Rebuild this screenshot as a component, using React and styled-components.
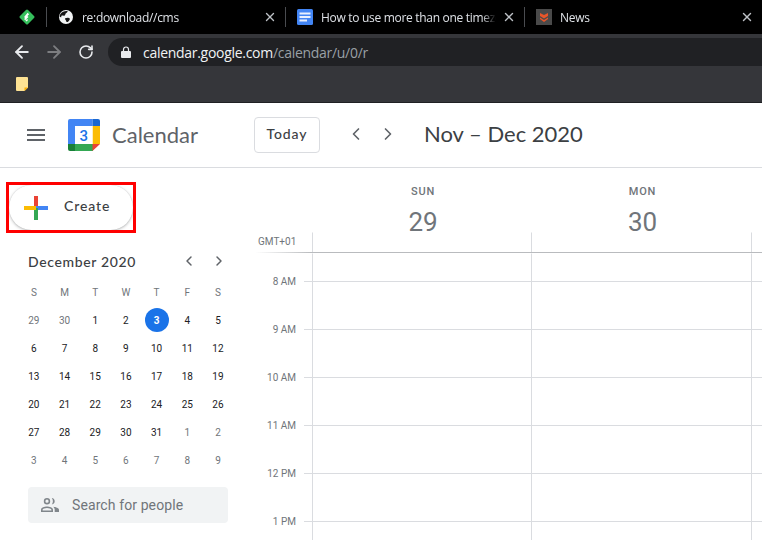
import React from 'react';
import styled, { createGlobalStyle } from 'styled-components';
import { ArrowLeft, ArrowRight, RotateCw, ChevronLeft, ChevronRight, X } from 'lucide-react';

const GlobalStyle = createGlobalStyle`
  html, body {
    margin: 0;
    padding: 0;
    height: 540px;
    overflow: hidden;
    background: #fff;
    font-family: Roboto, "Liberation Sans", sans-serif;
  }
  * { box-sizing: border-box; }
`;

const Page = styled.div`
  width: 762px;
  height: 540px;
  display: flex;
  flex-direction: column;
  overflow: hidden;
`;

const TabStrip = styled.div`
  height: 34px;
  background: #000;
  display: flex;
  align-items: center;
`;

const PinnedTab = styled.div`
  width: 46px;
  height: 20px;
  padding-left: 19px;
  display: flex;
  align-items: center;
`;

const Tab = styled.div`
  width: ${(p) => p.$width}px;
  height: 20px;
  border-left: 1px solid #4a4c50;
  display: flex;
  align-items: center;
  padding: 0 8px 0 11px;
  color: #dee1e6;
`;

const TabIcon = styled.svg`
  width: 16px;
  height: 16px;
  flex: none;
`;

const TabTitle = styled.span`
  flex: 1;
  margin: 0 6px 0 8px;
  font-family: "Open Sans", sans-serif;
  font-size: 12px;
  letter-spacing: -0.3px;
  white-space: nowrap;
  overflow: hidden;
  mask-image: linear-gradient(to left, transparent 0, #000 14px);
`;

const Toolbar = styled.div`
  height: 36px;
  background: #35363a;
  display: flex;
  align-items: center;
  padding-left: 12px;
  color: #e8eaed;
`;

const NavButton = styled.div`
  width: 32px;
  padding-left: ${(p) => p.$inset || 0}px;
  display: flex;
  align-items: center;
  color: ${(p) => (p.$off ? '#7d7e81' : '#e8eaed')};
`;

const Omnibox = styled.div`
  flex: 1;
  height: 28px;
  background: #202124;
  border-radius: 14px 0 0 14px;
  display: flex;
  align-items: center;
  padding-left: 13px;
  font-family: "Open Sans", sans-serif;
  font-size: 14px;
  letter-spacing: -0.29px;
`;

const UrlHost = styled.span`
  margin-left: 12px;
  color: #f1f3f4;
`;

const UrlPath = styled.span`
  color: #9aa0a6;
`;

const Bookmarks = styled.div`
  height: 33px;
  background: #35363a;
  border-bottom: 1px solid #1f2023;
  padding: 7px 0 0 16px;
`;

const Glyph = styled.svg`
  display: block;
  flex: none;
`;

const AppHeader = styled.header`
  height: 65px;
  border-bottom: 1px solid #dadce0;
  display: flex;
  align-items: center;
  color: #3c4043;
`;

const Menu = styled.svg`
  width: 18px;
  height: 12px;
  margin: 0 23px 0 27px;
  flex: none;
`;

const Brand = styled.span`
  margin: 0 0 2px 12px;
  width: 142px;
  font-family: Lato, sans-serif;
  font-size: 22px;
  color: #5f6368;
`;

const TodayButton = styled.button`
  width: 66px;
  height: 36px;
  background: #fff;
  border: 1px solid #dadce0;
  border-radius: 4px;
  color: #3c4043;
  font-family: Lato, sans-serif;
  font-size: 14px;
  font-weight: 500;
  letter-spacing: 0.9px;
  padding: 0 0 3px;
`;

const HeaderNav = styled.div`
  display: flex;
  gap: 12px;
  margin: 0 0 2px 26px;
  color: #5f6368;
`;

const RangeTitle = styled.h1`
  margin: 0 0 4px 26px;
  font-family: Lato, sans-serif;
  font-size: 22px;
  font-weight: 400;
  color: #3c4043;
`;

const Body = styled.div`
  flex: 1;
  display: flex;
  min-height: 0;
`;

const Sidebar = styled.aside`
  width: 256px;
  flex: none;
  padding: 14px 0 0 6px;
`;

const CreateFrame = styled.div`
  width: 130px;
  height: 51px;
  border: 3px solid #f00;
  overflow: hidden;
`;

const CreateButton = styled.button`
  width: 100%;
  height: 45px;
  display: flex;
  align-items: center;
  gap: 16px;
  padding: 0 0 0 15px;
  background: #fff;
  border: none;
  border-radius: 24px;
  box-shadow: 0 1px 3px 0 rgba(60, 64, 67, 0.35), 0 0 1px rgba(60, 64, 67, 0.2);
  color: #3c4043;
  font-family: Lato, sans-serif;
  font-size: 14px;
  font-weight: 500;
  letter-spacing: 0.9px;
`;

const CreateLabel = styled.span`
  margin-bottom: 5px;
`;

const MiniCal = styled.section`
  margin: 16px 0 0 12.5px;
  width: 217px;
`;

const MiniHead = styled.div`
  height: 24px;
  padding-left: 9.5px;
  display: flex;
  align-items: center;
  font-family: Lato, sans-serif;
  font-size: 14px;
  font-weight: 500;
  letter-spacing: 0.65px;
  color: #3c4043;
`;

const MiniTitle = styled.span`
  flex: 1;
`;

const MiniNav = styled.div`
  display: flex;
  gap: 14px;
  margin-right: 9px;
  color: #5f6368;
`;

const MiniGrid = styled.div`
  margin-top: 5px;
  display: grid;
  grid-template-columns: repeat(7, 30.7px);
  grid-auto-rows: 28px;
`;

const MiniCell = styled.div`
  display: flex;
  align-items: center;
  justify-content: center;
  font-size: 10px;
  font-weight: 400;
  color: ${(p) => (p.$head || p.$muted ? '#70757a' : '#202124')};
`;

const Today = styled.span`
  width: 24px;
  height: 24px;
  border-radius: 50%;
  background: #1a73e8;
  color: #fff;
  display: flex;
  align-items: center;
  justify-content: center;
  font-weight: 700;
`;

const PeopleSearch = styled.div`
  margin: 13px 0 0 9.5px;
  width: 200px;
  height: 36px;
  border-radius: 4px;
  background: #f1f3f4;
  display: flex;
  align-items: center;
  gap: 13px;
  padding-left: 13px;
  font-size: 14px;
  letter-spacing: 0.1px;
  color: #70757a;
`;

const Main = styled.main`
  flex: 1;
  min-width: 0;
`;

const Columns = `
  display: grid;
  grid-template-columns: 48px 8px 219px 220px 1fr;
`;

const DayHeader = styled.div`
  ${Columns}
  height: 64px;
`;

const DayHead = styled.div`
  display: flex;
  flex-direction: column;
  align-items: center;
  padding: 18px 0 0 3px;
  color: #70757a;
  grid-column: ${(p) => p.$col};
`;

const DayName = styled.span`
  font-size: 11px;
  font-weight: 500;
  letter-spacing: 0.8px;
  line-height: 12px;
`;

const DayNumber = styled.span`
  margin-top: 9px;
  font-size: 26px;
  line-height: 30px;
`;

const AllDay = styled.div`
  ${Columns}
  height: 21px;
  border-bottom: 1px solid #b9bbbe;
  border-image: linear-gradient(to right, transparent 0, #b9bbbe 56px) 1;
`;

const Zone = styled.span`
  grid-column: 1 / 3;
  padding-left: 2px;
  font-size: 10px;
  line-height: 20px;
  color: #70757a;
`;

const TimeRow = styled.div`
  ${Columns}
  height: ${(p) => p.$h}px;
`;

const TimeLabel = styled.span`
  grid-column: 1;
  padding-right: 8px;
  text-align: right;
  font-size: 10px;
  line-height: 12px;
  color: #70757a;
  transform: translateY(-5px);
`;

const Tick = styled.div`
  border-top: 1px solid ${(p) => (p.$none ? 'transparent' : '#dadce0')};
`;

const Cell = styled.div`
  border-left: 1px solid #dadce0;
  border-top: 1px solid ${(p) => (p.$none ? 'transparent' : '#dadce0')};
`;

const head = ['S', 'M', 'T', 'W', 'T', 'F', 'S'];
const days = [
  [29, 1], [30, 1], [1], [2], [3, 0, 1], [4], [5],
  [6], [7], [8], [9], [10], [11], [12],
  [13], [14], [15], [16], [17], [18], [19],
  [20], [21], [22], [23], [24], [25], [26],
  [27], [28], [29], [30], [31], [1, 1], [2, 1],
  [3, 1], [4, 1], [5, 1], [6, 1], [7, 1], [8, 1], [9, 1],
];
const hours = ['8 AM', '9 AM', '10 AM', '11 AM', '12 PM', '1 PM'];

const CalendarLogo = () => (
  <Glyph width="32" height="32" viewBox="0 0 32 32">
    <path d="M2 0h22.500v7H7v18H0V2a2 2 0 0 1 2-2z" fill="#4285f4" />
    <path d="M24.500 0H30a2 2 0 0 1 2 2v5h-7.500z" fill="#1967d2" />
    <rect x="24.500" y="7" width="7.500" height="18" fill="#fbbc04" />
    <rect x="7" y="25" width="18" height="7" fill="#34a853" />
    <path d="M0 25h7v7H2a2 2 0 0 1-2-2z" fill="#188038" />
    <path d="M24.500 25H32l-7.500 7z" fill="#ea4335" />
    <rect x="7" y="7" width="17.500" height="18" fill="#fff" />
    <text x="15.800" y="21.500" textAnchor="middle" fontFamily="Roboto, sans-serif" fontSize="15" fontWeight="500" fill="#1a73e8">3</text>
  </Glyph>
);

const PlusIcon = () => (
  <Glyph width="24" height="24" viewBox="0 0 24 24">
    <rect x="10" y="0" width="4" height="12" fill="#ea4335" />
    <rect x="12" y="10" width="12" height="4" fill="#4285f4" />
    <rect x="10" y="12" width="4" height="12" fill="#34a853" />
    <rect x="0" y="10" width="12" height="4" fill="#fbbc04" />
  </Glyph>
);

export default function App() {
  return (
    <Page>
      <GlobalStyle />
      <TabStrip>
        <PinnedTab>
          <TabIcon viewBox="0 0 16 16">
            <rect x="2.300" y="2.300" width="11.400" height="11.400" rx="1.500" fill="#35bf5c" transform="rotate(45 8 8)" />
            <path d="M8.600 3.800l1.500 1.500-3.900 3.900-1.100-1.100zM8.400 7l1.100 1.100-3.300 3.100-1.100-1.100zM8.100 10l1 1-1.600 1.600-1-1z" fill="#fff" />
          </TabIcon>
        </PinnedTab>
        <Tab $width={239}>
          <TabIcon viewBox="0 0 16 16">
            <circle cx="8" cy="8" r="7" fill="#f1f3f4" />
            <path d="M2.800 4.500C4 2.800 6.500 1.700 9.500 2c.3 1-.6 1.600-1.500 2.200-.9.700-.5 1.700-1.300 2.300-1 .6-2.500-.3-3.300.4-.3.300-.3.800 0 1.300L1.800 8c-.2-1.300.2-2.500 1-3.500zM7.300 9.200c1.200-.7 3.800-.7 4.500.2.300.9-.6 2.100-1.500 3.100-.7.800-1.700.8-2-.1-.3-.8-.6-1.200-1-1.800-.3-.6-.5-1 0-1.400z" fill="#141414" />
          </TabIcon>
          <TabTitle>re:download//cms</TabTitle>
          <X size={14} strokeWidth={2.4} color="#bdc1c6" />
        </Tab>
        <Tab $width={239}>
          <TabIcon viewBox="0 0 16 16">
            <rect width="16" height="16" rx="1.500" fill="#4285f4" />
            <path d="M2.500 3.500h11v2h-11zM2.500 7h11v2h-11zM2.500 10.500h7.500v2H2.500z" fill="#e8f0fe" />
          </TabIcon>
          <TabTitle>How to use more than one timezone</TabTitle>
          <X size={14} strokeWidth={2.4} color="#bdc1c6" />
        </Tab>
        <Tab $width={238}>
          <TabIcon viewBox="0 0 16 16">
            <rect width="16" height="16" fill="#4a4a4a" />
            <path d="M4 4l4 2 4-2v3L8 9.500 4 7zM4 8.500l4 2.500 4-2.500V10L8 13l-4-3z" fill="#e8562a" />
          </TabIcon>
          <TabTitle>News</TabTitle>
          <X size={14} strokeWidth={2.4} color="#bdc1c6" />
        </Tab>
      </TabStrip>

      <Toolbar>
        <NavButton><ArrowLeft size={20} strokeWidth={2.2} /></NavButton>
        <NavButton $off><ArrowRight size={20} strokeWidth={2.2} /></NavButton>
        <NavButton $inset={2}><RotateCw size={16} strokeWidth={2.4} /></NavButton>
        <Omnibox>
          <Glyph width="10" height="12" viewBox="0 0 10 12">
            <path d="M1 5h8a1 1 0 0 1 1 1v5a1 1 0 0 1-1 1H1a1 1 0 0 1-1-1V6a1 1 0 0 1 1-1z" fill="#e8eaed" />
            <path d="M2.500 5V3.500a2.500 2.500 0 0 1 5 0V5" fill="none" stroke="#e8eaed" strokeWidth="1.200" />
          </Glyph>
          <UrlHost>calendar.google.com</UrlHost>
          <UrlPath>/calendar/u/0/r</UrlPath>
        </Omnibox>
      </Toolbar>

      <Bookmarks>
        <Glyph width="12" height="14" viewBox="0 0 12 14">
          <path d="M1 0h10a1 1 0 0 1 1 1v9.500L8.500 14H1a1 1 0 0 1-1-1V1a1 1 0 0 1 1-1z" fill="#fde293" />
          <path d="M12 10.500L8.500 14v-3.500z" fill="#f9ab00" />
        </Glyph>
      </Bookmarks>

      <AppHeader>
        <Menu viewBox="0 0 18 12">
          <path d="M0 0h18v2H0zM0 5h18v2H0zM0 10h18v2H0z" fill="#5f6368" />
        </Menu>
        <CalendarLogo />
        <Brand>Calendar</Brand>
        <TodayButton>Today</TodayButton>
        <HeaderNav>
          <ChevronLeft size={20} strokeWidth={2} />
          <ChevronRight size={20} strokeWidth={2} />
        </HeaderNav>
        <RangeTitle>Nov – Dec 2020</RangeTitle>
      </AppHeader>

      <Body>
        <Sidebar>
          <CreateFrame>
            <CreateButton>
              <PlusIcon />
              <CreateLabel>Create</CreateLabel>
            </CreateButton>
          </CreateFrame>

          <MiniCal>
            <MiniHead>
              <MiniTitle>December 2020</MiniTitle>
              <MiniNav>
                <ChevronLeft size={16} strokeWidth={2.2} />
                <ChevronRight size={16} strokeWidth={2.2} />
              </MiniNav>
            </MiniHead>
            <MiniGrid>
              {head.map((d, i) => (
                <MiniCell key={i} $head>{d}</MiniCell>
              ))}
              {days.map(([n, muted, today], i) => (
                <MiniCell key={i} $muted={muted}>
                  {today ? <Today>{n}</Today> : n}
                </MiniCell>
              ))}
            </MiniGrid>
            <PeopleSearch>
              <Glyph width="18" height="16" viewBox="0 0 18 16" fill="#80868b">
                <path d="M6 1a3.200 3.200 0 1 1 0 6.400A3.200 3.200 0 0 1 6 1zm0 1.600a1.600 1.600 0 1 0 0 3.200 1.600 1.600 0 0 0 0-3.200z" />
                <path d="M10.800 1c1.700.2 2.900 1.500 2.900 3.200s-1.200 3-2.900 3.200c.7-.9 1.100-2 1.100-3.200s-.4-2.300-1.100-3.200z" />
                <path d="M0 15v-2.300C0 10.700 3.500 9.500 6 9.500s6 1.200 6 3.200V15zm1.600-1.600h8.800v-.7C10.400 11.900 8 11.100 6 11.100s-4.400.8-4.400 1.600z" />
                <path d="M12.300 9.700c2.600.3 5.700 1.300 5.700 3V15h-4.300v-2.300c0-1.200-.6-2.200-1.400-3z" />
              </Glyph>
              Search for people
            </PeopleSearch>
          </MiniCal>
        </Sidebar>

        <Main>
          <DayHeader>
            <DayHead $col={3}>
              <DayName>SUN</DayName>
              <DayNumber>29</DayNumber>
            </DayHead>
            <DayHead $col={4}>
              <DayName>MON</DayName>
              <DayNumber>30</DayNumber>
            </DayHead>
          </DayHeader>
          <AllDay>
            <Zone>GMT+01</Zone>
            <Cell $none />
            <Cell $none />
            <Cell $none />
          </AllDay>
          <TimeRow $h={28}>
            <span />
            <Tick $none />
            <Cell $none />
            <Cell $none />
            <Cell $none />
          </TimeRow>
          {hours.map((h) => (
            <TimeRow key={h} $h={48}>
              <TimeLabel>{h}</TimeLabel>
              <Tick />
              <Cell />
              <Cell />
              <Cell />
            </TimeRow>
          ))}
        </Main>
      </Body>
    </Page>
  );
}
